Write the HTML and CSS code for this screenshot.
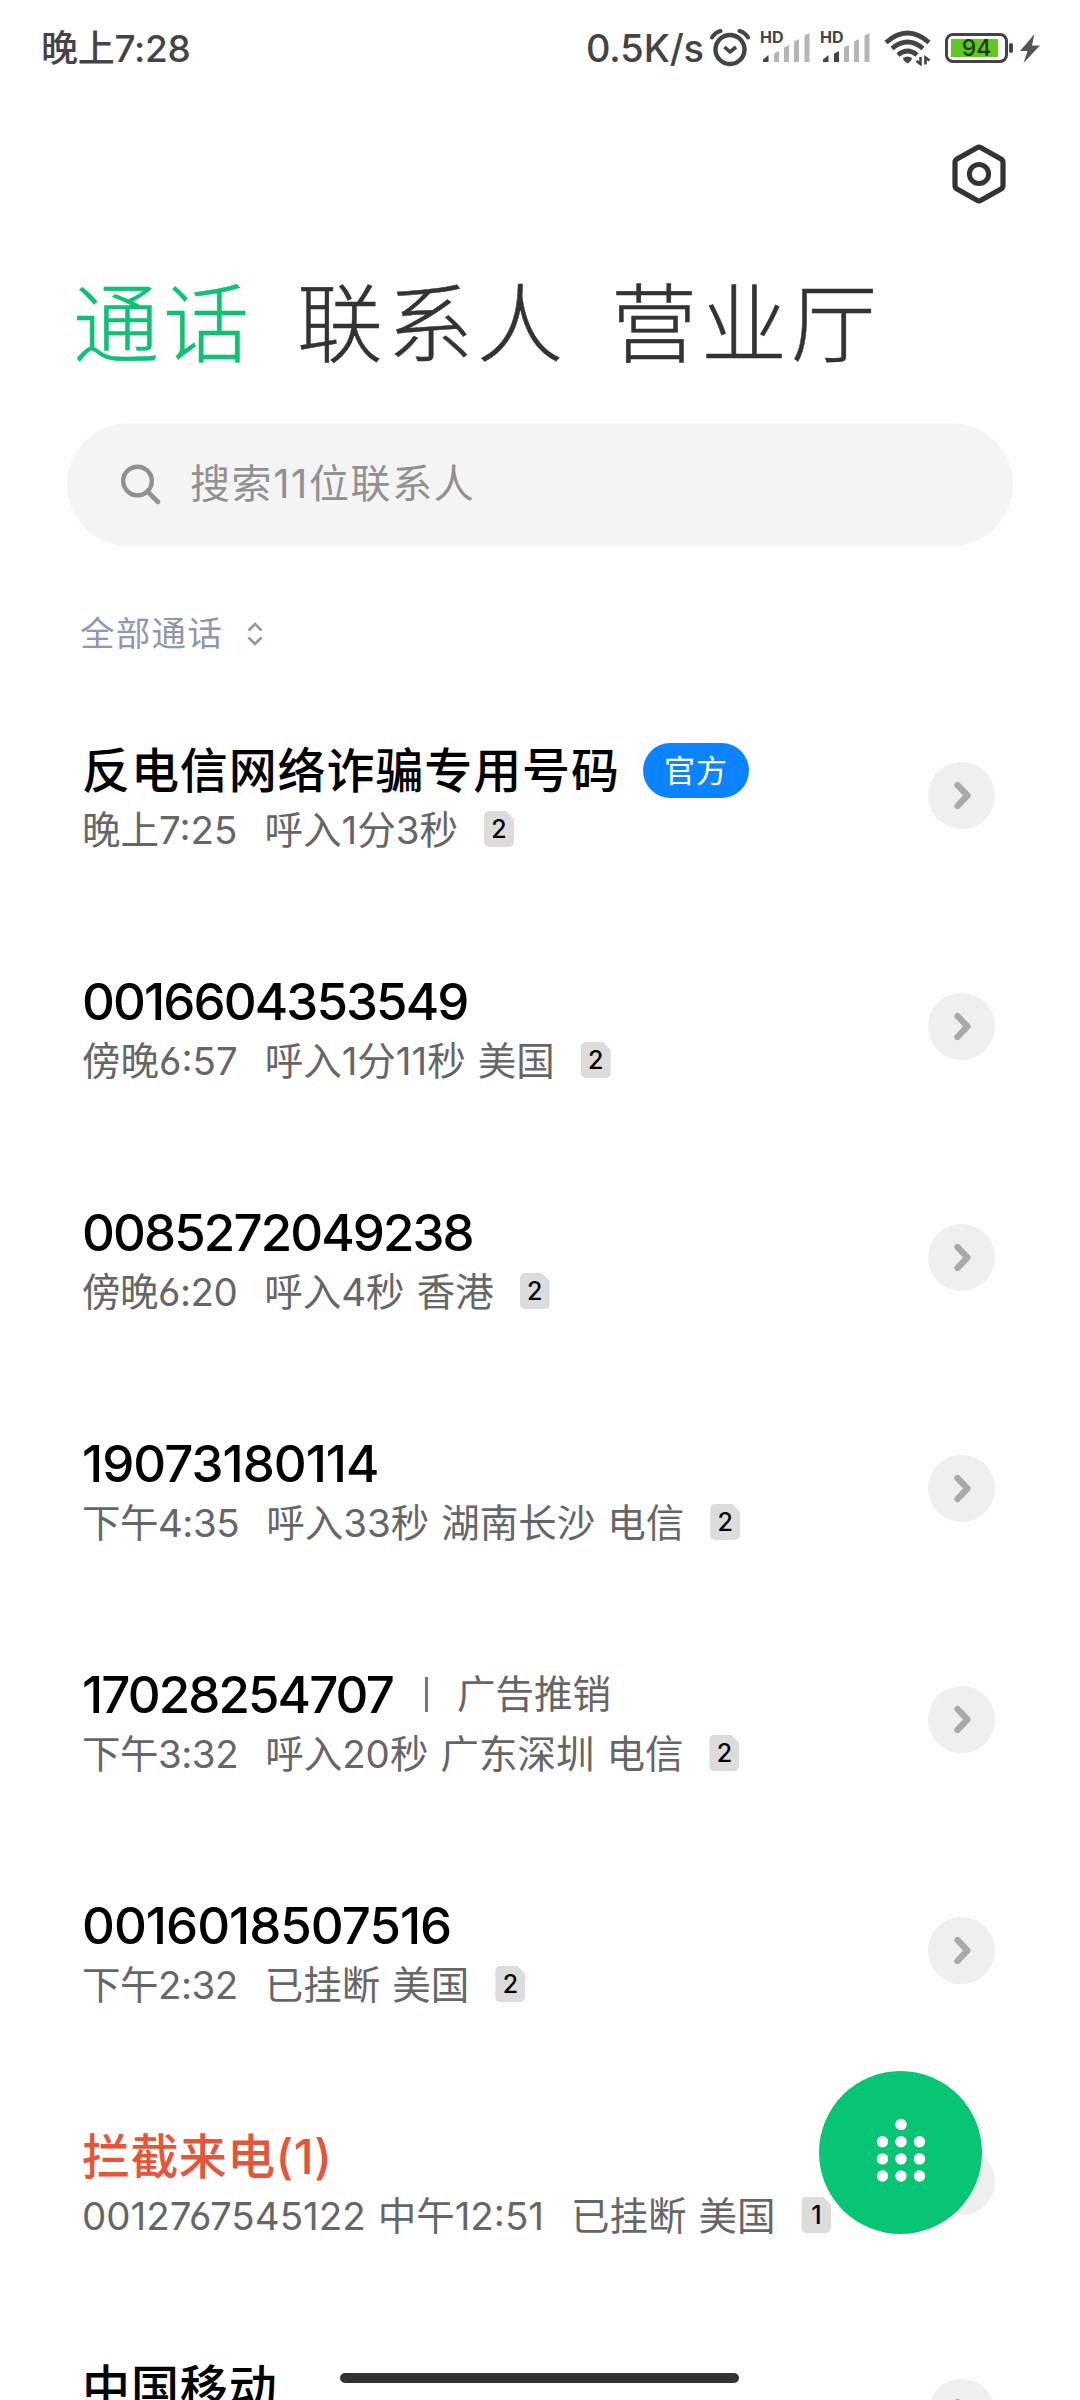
FILE: index.html
```
<!DOCTYPE html>
<html lang="zh-CN">
<head>
    <meta charset="UTF-8">
    <meta name="viewport" content="width=device-width, initial-scale=1.0">
    <title>通话</title>
    <link rel="stylesheet" href="styles.css">
</head>
<body>
<!-- 公用图标 -->
<svg class="symbols">
    <symbol id="icon-arrow" viewBox="0 0 68 68">
        <path d="M30 23.5l10 10.500l-10 10.500" fill="none" stroke="#a9a9a9" stroke-width="6.500" stroke-linecap="round" stroke-linejoin="round"/>
    </symbol>
</svg>
<div class="screen">
    <div class="status-bar">
        <span class="clock">晚上7:28</span>
        <div class="status-right">
            <span class="speed">0.5K/s</span>
            <svg class="alarm" viewBox="0 0 40 38">
                <circle cx="20" cy="20.5" r="14.5" fill="none" stroke="#444" stroke-width="4.400"/>
                <path d="M14.5 18l5.5 5l6-5" fill="none" stroke="#444" stroke-width="3.6" stroke-linejoin="round"/>
                <path d="M2 8.5q3-5 8.5-6.5M38 8.5q-3-5-8.5-6.5" fill="none" stroke="#444" stroke-width="4" stroke-linecap="round"/>
            </svg>
            <div class="signal">
                <span class="hd">HD</span>
                <svg viewBox="0 0 50 34">
                    <path class="on" d="M2 31v-2.500l5.500-4.500v7z"/>
                    <path d="M13 31v-8.500l5-2.500v11zM23 31v-14.500l5-2.500v17zM33 31v-20.500l5-2.500v23zM43.500 31v-26.500l5-2.500v29z"/>
                </svg>
            </div>
            <div class="signal">
                <span class="hd">HD</span>
                <svg viewBox="0 0 50 34">
                    <path class="on" d="M2 31v-2.500l5.500-4.500v7zM13 31v-8.500l5-2.500v11z"/>
                    <path d="M23 31v-14.500l5-2.500v17zM33 31v-20.500l5-2.500v23zM43.500 31v-26.500l5-2.500v29z"/>
                </svg>
            </div>
            <svg class="wifi" viewBox="0 0 48 36">
                <path d="M2 12.500q21.500-19 43 0M8 18.500q15.500-13 31 0M14 25q9.500-8 19 0" fill="none" stroke="#444" stroke-width="4.600"/>
                <path d="M19 28q4.500-3 9 0q0 2.500-4.500 5.500q-4.500-3-4.500-5.500z" fill="#444"/>
                <path d="M36.500 27v7l-4-3M41.500 34.500v-7l4 3" fill="none" stroke="#444" stroke-width="2.600"/>
            </svg>
            <div class="battery">
                <span class="level">94</span>
            </div>
            <svg class="bolt" viewBox="0 0 20 29">
                <path d="M14.500 0l-14.500 17h7.500l-4 12l16.500-17.500h-8z" fill="#555"/>
            </svg>
        </div>
    </div>

    <div class="toolbar">
        <svg class="settings" viewBox="0 0 56 60">
            <path d="M26 3.700q2-1.100 4 0l20 11.300q2 1.200 2 3.500v23q0 2.300-2 3.500l-20 11.300q-2 1.100-4 0l-20-11.300q-2-1.200-2-3.500v-23q0-2.300 2-3.500z" fill="none" stroke="#333" stroke-width="5.200"/>
            <circle cx="28" cy="30" r="9.600" fill="none" stroke="#333" stroke-width="5"/>
        </svg>
    </div>

    <div class="tabs">
        <span class="tab active">通话</span>
        <span class="tab">联系人</span>
        <span class="tab">营业厅</span>
    </div>

    <div class="search">
        <svg viewBox="0 0 42 44">
            <circle cx="17.500" cy="18" r="14.300" fill="none" stroke="#919191" stroke-width="4.400"/>
            <path d="M27.500 28.500l10.500 10.500" stroke="#919191" stroke-width="4.600" stroke-linecap="round"/>
        </svg>
        <span>搜索11位联系人</span>
    </div>

    <div class="filter">
        <span>全部通话</span>
        <svg viewBox="0 0 16 24">
            <path d="M1.500 8.500l6.500-6.500l6.500 6.500M1.500 15.500l6.500 6.500l6.500-6.500" fill="none" stroke="#8f96b3" stroke-width="2.600"/>
        </svg>
    </div>

    <div class="call-list">
        <div class="call">
            <div class="info">
                <div class="title"><span class="name">反电信网络诈骗专用号码</span><span class="official">官方</span></div>
                <div class="detail"><span class="time">晚上7:25</span><span>呼入1分3秒</span><span class="sim">2</span></div>
            </div>
            <svg class="arrow"><use href="#icon-arrow"/></svg>
        </div>
        <div class="call">
            <div class="info">
                <div class="title"><span class="number">0016604353549</span></div>
                <div class="detail"><span class="time">傍晚6:57</span><span>呼入1分11秒</span><span>美国</span><span class="sim">2</span></div>
            </div>
            <svg class="arrow"><use href="#icon-arrow"/></svg>
        </div>
        <div class="call">
            <div class="info">
                <div class="title"><span class="number">0085272049238</span></div>
                <div class="detail"><span class="time tight">傍晚6:20</span><span>呼入4秒</span><span>香港</span><span class="sim">2</span></div>
            </div>
            <svg class="arrow"><use href="#icon-arrow"/></svg>
        </div>
        <div class="call">
            <div class="info">
                <div class="title"><span class="number wide">19073180114</span></div>
                <div class="detail"><span class="time tight">下午4:35</span><span>呼入33秒</span><span>湖南长沙</span><span>电信</span><span class="sim">2</span></div>
            </div>
            <svg class="arrow"><use href="#icon-arrow"/></svg>
        </div>
        <div class="call">
            <div class="info">
                <div class="title"><span class="number">17028254707</span><span class="mark">广告推销</span></div>
                <div class="detail"><span class="time tight">下午3:32</span><span>呼入20秒</span><span>广东深圳</span><span>电信</span><span class="sim">2</span></div>
            </div>
            <svg class="arrow"><use href="#icon-arrow"/></svg>
        </div>
        <div class="call">
            <div class="info">
                <div class="title"><span class="number wide">0016018507516</span></div>
                <div class="detail"><span class="time tight">下午2:32</span><span>已挂断</span><span>美国</span><span class="sim">2</span></div>
            </div>
            <svg class="arrow"><use href="#icon-arrow"/></svg>
        </div>
        <div class="call">
            <div class="info">
                <div class="title"><span class="name blocked">拦截来电(1)</span></div>
                <div class="detail"><span>0012767545122</span><span class="time">中午12:51</span><span>已挂断</span><span>美国</span><span class="sim">1</span></div>
            </div>
            <svg class="arrow"><use href="#icon-arrow"/></svg>
        </div>
        <div class="call">
            <div class="info">
                <div class="title"><span class="name">中国移动</span></div>
            </div>
            <svg class="arrow"><use href="#icon-arrow"/></svg>
        </div>
    </div>

    <!-- 拨号键盘按钮 -->
    <div class="dial-button">
        <svg viewBox="0 0 50 64" fill="#fff">
            <circle cx="25" cy="6.500" r="5.700"/>
            <circle cx="6.500" cy="23.700" r="5.700"/><circle cx="25" cy="23.700" r="5.700"/><circle cx="43.500" cy="23.700" r="5.700"/>
            <circle cx="6.500" cy="40.900" r="5.700"/><circle cx="25" cy="40.900" r="5.700"/><circle cx="43.500" cy="40.900" r="5.700"/>
            <circle cx="6.500" cy="58" r="5.700"/><circle cx="25" cy="58" r="5.700"/><circle cx="43.500" cy="58" r="5.700"/>
        </svg>
    </div>
    <div class="home-bar"></div>
</div>
</body>
</html>
```
FILE: styles.css
```
* {
    box-sizing: border-box;
}
body, html {
    margin: 0;
    padding: 0;
    font-family: Inter, "Noto Sans CJK SC", sans-serif;
    background-color: #fefefe;
}
.symbols {
    display: none;
}
.screen {
    position: relative;
    width: 1080px;
    height: 2400px;
    overflow: hidden;
    white-space: nowrap;
}
svg {
    display: block;
    flex-shrink: 0;
}

/* 状态栏 */
.status-bar {
    display: flex;
    justify-content: space-between;
    height: 96px;
    padding: 0 40px 0 41px;
    line-height: 97px;
    color: #444;
}
.clock {
    font-size: 37px;
    font-weight: 500;
    letter-spacing: -0.3px;
}
.status-right {
    display: flex;
    align-items: center;
}
.speed {
    font-size: 38px;
    font-weight: 500;
    letter-spacing: -0.1px;
    margin-right: 6px;
}
.alarm {
    width: 40px;
    height: 38px;
    margin-right: 11px;
}
.signal {
    position: relative;
    width: 50px;
    height: 34px;
    margin-right: 10px;
}
.signal svg {
    width: 50px;
    height: 34px;
    fill: #b5b5b5;
}
.signal .on {
    fill: #444;
}
.hd {
    position: absolute;
    left: -1px;
    top: 0;
    font-size: 16px;
    font-weight: 700;
    line-height: 12px;
}
.wifi {
    width: 48px;
    height: 36px;
    margin: 0 13px 0 3px;
}
.battery {
    position: relative;
    width: 63px;
    height: 30px;
    padding: 3px;
    margin-right: 12px;
    border: 3px solid #444;
    border-radius: 8px;
}
.battery::after {
    content: "";
    position: absolute;
    right: -8px;
    top: 7px;
    width: 4px;
    height: 10px;
    border-radius: 2px;
    background-color: #444;
}
.level {
    display: block;
    width: 47px;
    height: 18px;
    padding-left: 4px;
    background-color: #5fc922;
    color: #1f3a10;
    font-size: 23px;
    font-weight: 500;
    line-height: 18px;
    text-align: center;
}
.bolt {
    width: 20px;
    height: 29px;
}

/* 标题区 */
.toolbar {
    display: flex;
    justify-content: flex-end;
    height: 164px;
    padding: 48px 73px 0 0;
}
.settings {
    width: 56px;
    height: 60px;
}
.tabs {
    display: flex;
    gap: 44px;
    height: 163px;
    padding-left: 73px;
}
.tab {
    font-size: 86px;
    font-weight: 300;
    letter-spacing: 4px;
    line-height: 130px;
    color: #333;
    -webkit-text-stroke: 0.5px #333;
}
.tab.active {
    color: #10c074;
    -webkit-text-stroke-color: #10c074;
}
.search {
    display: flex;
    align-items: center;
    width: 946px;
    height: 123px;
    margin-left: 67px;
    padding-left: 53px;
    border-radius: 62px;
    background-color: #f4f4f4;
    color: #919191;
    font-size: 40px;
    letter-spacing: 1.6px;
}
.search svg {
    width: 42px;
    height: 44px;
    margin-right: 28px;
}
.search span {
    line-height: 50px;
    padding-bottom: 2px;
}
.filter {
    display: flex;
    align-items: center;
    height: 135px;
    padding: 44px 0 3px 80px;
    color: #8f96b3;
    font-size: 34.5px;
    letter-spacing: 1.3px;
    line-height: 76px;
}
.filter svg {
    width: 16px;
    height: 24px;
    margin-left: 24px;
}

/* 通话记录 */
.call {
    display: flex;
    justify-content: space-between;
    align-items: flex-start;
    height: 231px;
    padding: 59px 85px 0 82px;
}
.title {
    display: flex;
    align-items: center;
    height: 62px;
    line-height: 62px;
    color: #000;
    font-weight: 500;
}
.name {
    font-size: 48px;
    letter-spacing: 0.9px;
}
.number {
    font-size: 51px;
    letter-spacing: -1.9px;
}
.number.wide {
    letter-spacing: -1px;
}
.blocked {
    color: #e5553a;
    letter-spacing: 0.4px;
}
.official {
    width: 106px;
    height: 55px;
    margin: -2px 0 0 23px;
    border-radius: 28px;
    background-color: #0d84ff;
    color: #fff;
    font-size: 31px;
    font-weight: 400;
    letter-spacing: 1px;
    line-height: 55px;
    text-align: center;
}
.mark {
    display: flex;
    align-items: center;
    margin-top: -2px;
    color: #666;
    font-size: 38.5px;
    font-weight: 400;
}
.mark::before {
    content: "";
    width: 3px;
    height: 35px;
    margin: 0 29px 0 32px;
    background-color: #777;
}
.detail {
    display: flex;
    align-items: center;
    gap: 12px;
    height: 50px;
    margin-top: 3px;
    color: #666;
    font-size: 38.5px;
    font-weight: 400;
    line-height: 48px;
    font-feature-settings: "cv03", "cv04";
}
.time {
    margin-right: 15px;
}
.time.tight {
    letter-spacing: -0.5px;
}
.sim {
    width: 30px;
    height: 36px;
    margin-left: 14px;
    margin-top: -2px;
    border-radius: 5px;
    background-color: #dcdcdc;
    clip-path: polygon(0 0, 22px 0, 30px 8px, 30px 36px, 0 36px);
    color: #000;
    font-size: 25px;
    font-weight: 500;
    line-height: 37px;
    text-align: center;
}
.arrow {
    width: 67px;
    height: 67px;
    margin-top: 22px;
    border-radius: 50%;
    background-color: #efefef;
}

/* 悬浮元素 */
.dial-button {
    position: absolute;
    left: 819px;
    top: 2071px;
    display: flex;
    justify-content: center;
    width: 163px;
    height: 163px;
    padding-top: 47px;
    border-radius: 50%;
    background-color: #08c575;
}
.dial-button svg {
    width: 50px;
    height: 64px;
}
.home-bar {
    position: absolute;
    left: 340px;
    top: 2373px;
    width: 399px;
    height: 10px;
    border-radius: 5px;
    background-color: #333;
}
```
